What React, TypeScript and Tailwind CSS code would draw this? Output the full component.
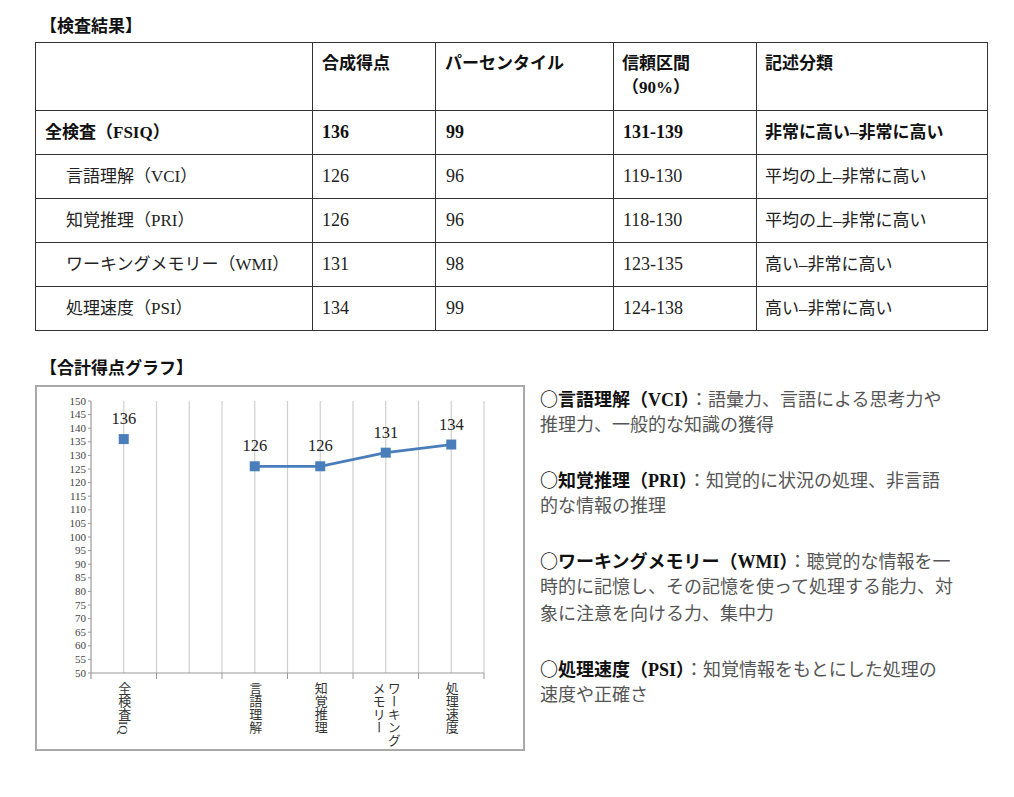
import React from 'react'

const serif = "font-['Liberation_Serif','Noto_Sans_CJK_JP',serif]"

interface Row {
  name: string
  score: string
  pct: string
  ci: string
  label: string
  bold?: boolean
}

const rows: Row[] = [
  { name: '全検査（FSIQ）', score: '136', pct: '99', ci: '131-139', label: '非常に高い–非常に高い', bold: true },
  { name: '言語理解（VCI）', score: '126', pct: '96', ci: '119-130', label: '平均の上–非常に高い' },
  { name: '知覚推理（PRI）', score: '126', pct: '96', ci: '118-130', label: '平均の上–非常に高い' },
  { name: 'ワーキングメモリー（WMI）', score: '131', pct: '98', ci: '123-135', label: '高い–非常に高い' },
  { name: '処理速度（PSI）', score: '134', pct: '99', ci: '124-138', label: '高い–非常に高い' },
]

// chart geometry (inside the box, after its border)
const AXIS_X = 54
const CAT_W = 65.5
const yOf = (v: number) => 286 - (v - 50) * 2.72
const cx = (i: number) => AXIS_X + CAT_W * (i + 0.5)

const points = [
  { i: 0, v: 136 },
  { i: 2, v: 126 },
  { i: 3, v: 126 },
  { i: 4, v: 131 },
  { i: 5, v: 134 },
]

const ticks = Array.from({ length: 21 }, (_, k) => 50 + k * 5)

function Chart() {
  const line = points.filter(p => p.i >= 2).map(p => `${cx(p.i)},${yOf(p.v)}`).join(' ')
  return (
    <div className="relative w-[490px] h-[366px] border-2 border-[#a9a9a9] shrink-0">
      <svg width="486" height="362" className="absolute left-0 top-0">
        {/* vertical grid lines */}
        {Array.from({ length: 6 }, (_, i) => (
          <g key={i}>
            <line x1={cx(i)} y1={14} x2={cx(i)} y2={286} stroke="#cfcfcf" strokeWidth="1.2" />
            <line x1={AXIS_X + CAT_W * (i + 1)} y1={14} x2={AXIS_X + CAT_W * (i + 1)} y2={286} stroke="#cfcfcf" strokeWidth="1.2" />
            <line x1={AXIS_X + CAT_W * (i + 1)} y1={286} x2={AXIS_X + CAT_W * (i + 1)} y2={292} stroke="#9a9a9a" strokeWidth="1" />
          </g>
        ))}
        <line x1={AXIS_X} y1={14} x2={AXIS_X} y2={292} stroke="#9a9a9a" strokeWidth="1.2" />
        <line x1={AXIS_X} y1={286} x2={AXIS_X + CAT_W * 6} y2={286} stroke="#9a9a9a" strokeWidth="1.2" />
        {ticks.map(v => (
          <g key={v}>
            <line x1={AXIS_X - 3} y1={yOf(v)} x2={AXIS_X} y2={yOf(v)} stroke="#9a9a9a" strokeWidth="1" />
            <text x={AXIS_X - 5} y={yOf(v) + 3.5} textAnchor="end" fontSize="11" fill="#444" fontFamily="Liberation Serif, serif">
              {v}
            </text>
          </g>
        ))}
        <polyline points={line} fill="none" stroke="#4a7ebb" strokeWidth="2.8" />
        {points.map(p => (
          <g key={p.i}>
            <rect x={cx(p.i) - 5} y={yOf(p.v) - 5} width="10" height="10" fill="#4a7ebb" />
            <text x={cx(p.i)} y={yOf(p.v) - 15} textAnchor="middle" fontSize="16.5" fill="#222" fontFamily="Liberation Serif, serif">
              {p.v}
            </text>
          </g>
        ))}
      </svg>
      {[
        { c: cx(0), t: ['全検査IQ'] },
        { c: cx(2), t: ['言語理解'] },
        { c: cx(3), t: ['知覚推理'] },
        { c: cx(4), t: ['ワーキング', 'メモリー'] },
        { c: cx(5), t: ['処理速度'] },
      ].map((l, k) => (
        <div
          key={k}
          className={`absolute top-[295px] w-[40px] flex justify-center ${serif}`}
          style={{ left: l.c - 20 }}
        >
          <div className="[writing-mode:vertical-rl] text-[13px] leading-[15px] text-[#333]">
            {l.t.map((s, j) => (
              <div key={j}>{s}</div>
            ))}
          </div>
        </div>
      ))}
    </div>
  )
}

const notes = [
  { head: '言語理解（VCI）', lines: ['：語彙力、言語による思考力や', '推理力、一般的な知識の獲得'] },
  { head: '知覚推理（PRI）', lines: ['：知覚的に状況の処理、非言語', '的な情報の推理'] },
  { head: 'ワーキングメモリー（WMI）', lines: ['：聴覚的な情報を一', '時的に記憶し、その記憶を使って処理する能力、対', '象に注意を向ける力、集中力'] },
  { head: '処理速度（PSI）', lines: ['：知覚情報をもとにした処理の', '速度や正確さ'] },
]

export default function App() {
  return (
    <div className={`w-[1014px] h-[797px] bg-white pl-[35px] pt-[13px] ${serif}`}>
      <div className="text-[17px] leading-[28px] font-bold text-[#111] pl-[5px]">【検査結果】</div>
      <table className="border-collapse w-[952px] mt-[1px] text-[17px] text-[#222] table-fixed">
        <colgroup>
          <col className="w-[277px]" />
          <col className="w-[123px]" />
          <col className="w-[178px]" />
          <col className="w-[143px]" />
          <col className="w-[231px]" />
        </colgroup>
        <thead>
          <tr className="h-[68px] font-bold text-[#111]">
            <th className="border-[1.5px] border-[#333]" />
            <th className="border-[1.5px] border-[#333] text-left align-top pl-[9px] pt-[9px] leading-[24px] font-bold">合成得点</th>
            <th className="border-[1.5px] border-[#333] text-left align-top pl-[9px] pt-[9px] leading-[24px] font-bold">パーセンタイル</th>
            <th className="border-[1.5px] border-[#333] text-left align-top pl-[8px] pt-[9px] leading-[24px] font-bold">
              信頼区間
              <br />
              （90%）
            </th>
            <th className="border-[1.5px] border-[#333] text-left align-top pl-[8px] pt-[9px] leading-[24px] font-bold">記述分類</th>
          </tr>
        </thead>
        <tbody>
          {rows.map((r, i) => (
            <tr key={i} className={`h-[44px] ${r.bold ? 'font-bold text-[#111]' : ''}`}>
              <td className={`border-[1.5px] border-[#333] ${r.bold ? 'pl-[9px]' : 'pl-[30px]'} whitespace-nowrap`}>{r.name}</td>
              <td className="border-[1.5px] border-[#333] pl-[9px] text-[18px]">{r.score}</td>
              <td className="border-[1.5px] border-[#333] pl-[10px] text-[18px]">{r.pct}</td>
              <td className="border-[1.5px] border-[#333] pl-[9px] text-[18px]">{r.ci}</td>
              <td className="border-[1.5px] border-[#333] pl-[8px] whitespace-nowrap">{r.label}</td>
            </tr>
          ))}
        </tbody>
      </table>

      <div className="text-[17px] leading-[28px] font-bold text-[#111] pl-[5px] mt-[24px]">【合計得点グラフ】</div>
      <div className="flex items-start gap-[15px] mt-[2px]">
        <Chart />
        <div className="flex flex-col gap-[27px] text-[18px] leading-[27px] text-[#555]">
          {notes.map((n, k) => (
            <div key={k}>
              {n.lines.map((l, j) => (
                <div key={j} className="whitespace-nowrap h-[27px]">
                  {j === 0 && (
                    <span className="font-bold text-[#111]">
                      <span className="font-['Noto_Sans_CJK_JP',sans-serif]">○</span>
                      {n.head}
                    </span>
                  )}
                  {l}
                </div>
              ))}
            </div>
          ))}
        </div>
      </div>
    </div>
  )
}
